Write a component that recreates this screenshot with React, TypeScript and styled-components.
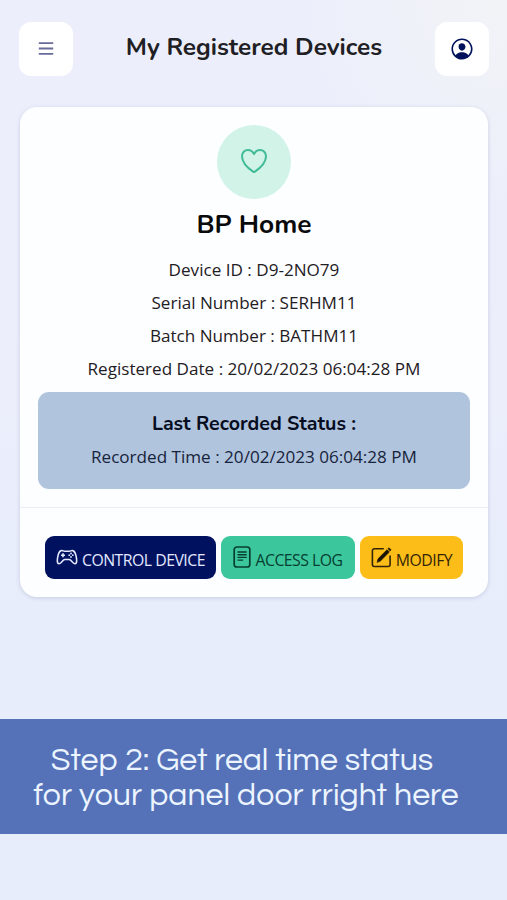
import React from "react";
import styled, { createGlobalStyle } from "styled-components";
import { IoPersonCircleOutline, IoHeartOutline } from "react-icons/io5";

const GlobalStyle = createGlobalStyle`
  * { box-sizing: border-box; }
  body { margin: 0; background: #e8edfb; }
`;

const Screen = styled.div`
  display: flex;
  flex-direction: column;
  width: 507px;
  height: 900px;
  overflow: hidden;
  color: #1f2024;
  font-family: "Open Sans", sans-serif;
  background:
    radial-gradient(circle at 100% 0, #f2f3f7 0, #f0f2f8 70px, rgba(238, 240, 250, 0) 210px),
    linear-gradient(180deg, #eceffb 0, #eceefb 380px, #e7edfb 620px, #e7edfb 100%);
`;

const Header = styled.header`
  display: flex;
  align-items: center;
  justify-content: space-between;
  height: 54px;
  margin: 22px 18px 0 19px;
`;

const IconButton = styled.button`
  display: grid;
  place-items: center;
  width: 54px;
  height: 54px;
  padding: 0;
  border: 0;
  border-radius: 12px;
  background: #fff;
  color: #00125c;
`;

const Title = styled.h1`
  margin: 0 0 4px;
  font: 700 24.4px/32px Nunito, "Open Sans", sans-serif;
  white-space: nowrap;
`;

const Card = styled.main`
  display: flex;
  flex-direction: column;
  height: 490px;
  margin: 31px 19px 0 20px;
  border-radius: 17px;
  background: #fdfeff;
  box-shadow: 0 1px 4px rgba(70, 75, 120, 0.2);
`;

const CardBody = styled.section`
  display: flex;
  flex-direction: column;
  align-items: center;
  height: 401px;
  padding: 18px 18px 0;
  border-bottom: 1px solid #eceef5;
`;

const Badge = styled.div`
  display: grid;
  place-items: center;
  width: 74px;
  height: 74px;
  padding-bottom: 2px;
  border-radius: 50%;
  background: #d1f3e8;
  color: #41bb96;
`;

const DeviceName = styled.h2`
  margin: 7px 0 11px;
  color: #090a0c;
  font: 700 26.3px/36px Nunito, "Open Sans", sans-serif;
`;

const Detail = styled.p`
  margin: 0;
  font-size: 17.1px;
  line-height: 33px;
  white-space: nowrap;
`;

const StatusPanel = styled.div`
  width: 432px;
  height: 97px;
  margin-top: 7px;
  padding-top: 16px;
  border-radius: 11px;
  background: #b0c4de;
  color: #17233b;
  text-align: center;
`;

const StatusTitle = styled.h3`
  margin: 0;
  color: #070d20;
  font: 700 19.6px/32px Nunito, "Open Sans", sans-serif;
`;

const Actions = styled.footer`
  display: flex;
  gap: 5px;
  padding: 28px 0 0 25px;
`;

const ActionButton = styled.button<{ $width: number; $bg: string; $fg: string }>`
  display: flex;
  align-items: center;
  justify-content: center;
  gap: 4px;
  width: ${({ $width }) => $width}px;
  height: 43px;
  padding: 0;
  border: 0;
  border-radius: 9px;
  background: ${({ $bg }) => $bg};
  color: ${({ $fg }) => $fg};
  font: 400 15.8px/24px "Open Sans", sans-serif;
  letter-spacing: -0.5px;
  white-space: nowrap;
  svg { flex: none; }
`;

const ActionLabel = styled.span`
  padding-top: 4px;
`;

const Caption = styled.aside`
  height: 115px;
  margin-top: 122px;
  padding: 24px 15px 0 0;
  background: #5572b9;
  color: #ecf5ff;
  font: 400 32px/35px "Century Gothic", "URW Gothic", Questrial, "Didact Gothic", Jost, Quicksand, Poppins, Nunito, Lato, sans-serif;
  text-align: center;
  white-space: nowrap;
`;

const CaptionLine = styled.div<{ $inset?: number; $spacing?: number }>`
  padding-right: ${({ $inset = 0 }) => $inset}px;
  letter-spacing: ${({ $spacing = 0 }) => $spacing}px;
`;

const MenuIcon = () => (
  <svg width="16" height="16" viewBox="0 0 16 16" fill="none" stroke="#696b99" strokeWidth="1.8">
    <path d="M.8 2.2h14.4M.8 7.5h14.4M.8 12.8h14.4" />
  </svg>
);

const GamepadIcon = () => (
  <svg width="22" height="24" viewBox="0 0 22 24" fill="none" stroke="currentColor" strokeWidth="1.6" strokeLinejoin="round">
    <path d="M5.3 4.600c1.500-.4 2 .6 3.200.6h5c1.200 0 1.700-1 3.200-.6 1.700.4 2.500 2 3.100 4.300.6 2.400 1.200 5.500.7 7.400-.4 1.700-2.100 1.800-3.400.5l-2.400-2.600c-.5-.5-.9-.7-1.600-.7H8.900c-.7 0-1.100.2-1.600.7l-2.400 2.600c-1.300 1.300-3 1.200-3.400-.5-.5-1.900.1-5 .7-7.400.6-2.300 1.400-3.900 3.100-4.300Z" />
    <path d="M7 7.300v4M5 9.300h4" />
    <g fill="currentColor" stroke="none">
      <circle cx="15" cy="7.500" r=".9" /><circle cx="15" cy="11" r=".9" />
      <circle cx="13.200" cy="9.200" r=".9" /><circle cx="16.800" cy="9.200" r=".9" />
    </g>
  </svg>
);

const LogIcon = () => (
  <svg width="18" height="26" viewBox="0 0 18 26" fill="none" stroke="currentColor" strokeLinecap="round">
    <rect x="1.200" y="2" width="15.600" height="20" rx="2.600" strokeWidth="1.700" />
    <path d="M5 7h8.200M5 9.700h8.200M5 12.400h8.200M5 15.100h4.600" strokeWidth="1.400" />
  </svg>
);

const EditIcon = () => (
  <svg width="21" height="26" viewBox="0 0 21 26" fill="none" stroke="currentColor" strokeLinecap="round" strokeLinejoin="round">
    <path d="M12.200 3.700H3.400A2 2 0 0 0 1.400 5.700v13.800a2 2 0 0 0 2 2h13.700a2 2 0 0 0 2-2v-8.400" strokeWidth="1.600" />
    <path d="M6.200 17.100l.9-3.400L16 4.800l2.300 2.300-8.900 8.900ZM17.100 3.700l.9-.9 2.100 2.100-.9.900Z" fill="#1b1305" stroke="#1b1305" strokeWidth=".7" />
  </svg>
);

const details = [
  "Device ID : D9-2NO79",
  "Serial Number : SERHM11",
  "Batch Number : BATHM11",
  "Registered Date : 20/02/2023 06:04:28 PM",
];

export default function App() {
  return (
    <>
      <GlobalStyle />
      <Screen>
        <Header>
          <IconButton aria-label="Menu"><MenuIcon /></IconButton>
          <Title>My Registered Devices</Title>
          <IconButton aria-label="Account"><IoPersonCircleOutline size={26} /></IconButton>
        </Header>
        <Card>
          <CardBody>
            <Badge><IoHeartOutline size={32} /></Badge>
            <DeviceName>BP Home</DeviceName>
            {details.map((text) => <Detail key={text}>{text}</Detail>)}
            <StatusPanel>
              <StatusTitle>Last Recorded Status :</StatusTitle>
              <Detail>Recorded Time : 20/02/2023 06:04:28 PM</Detail>
            </StatusPanel>
          </CardBody>
          <Actions>
            <ActionButton $width={171} $bg="#00125f" $fg="#e3e7ff">
              <GamepadIcon />
              <ActionLabel>CONTROL DEVICE</ActionLabel>
            </ActionButton>
            <ActionButton $width={134} $bg="#3bc79b" $fg="#073e32">
              <LogIcon />
              <ActionLabel>ACCESS LOG</ActionLabel>
            </ActionButton>
            <ActionButton $width={103} $bg="#fdbd19" $fg="#332407">
              <EditIcon />
              <ActionLabel>MODIFY</ActionLabel>
            </ActionButton>
          </Actions>
        </Card>
        <Caption>
          <CaptionLine $inset={8}>Step 2: Get real time status</CaptionLine>
          <CaptionLine $spacing={0.1}>for your panel door rright here</CaptionLine>
        </Caption>
      </Screen>
    </>
  );
}
